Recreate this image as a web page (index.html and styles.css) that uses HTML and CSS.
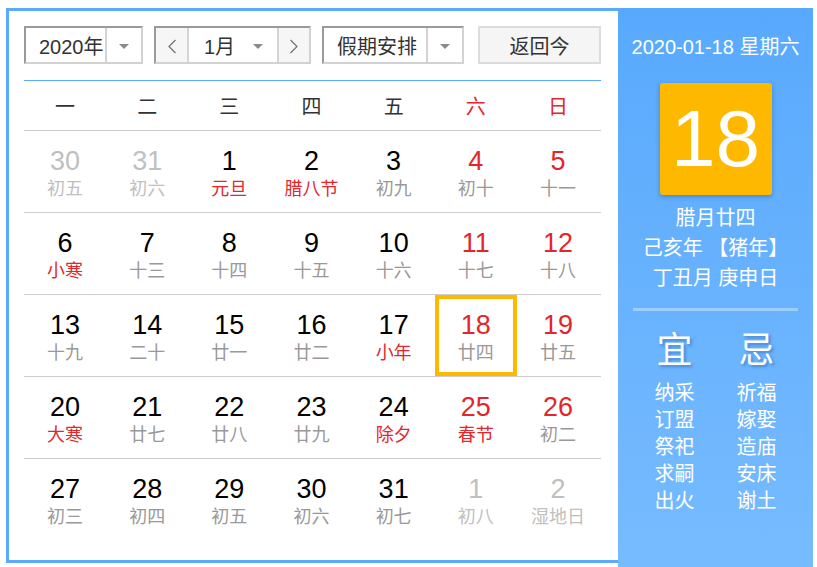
FILE: index.html
```html
<!DOCTYPE html>
<html lang="zh-CN">
<head>
<meta charset="utf-8">
<title>万年历</title>
<link rel="stylesheet" href="styles.css">
</head>
<body>
<div class="calendar">
  <div class="main">
    <div class="toolbar">
      <div class="select year">
        <span class="sel-text">2020年</span>
        <span class="sel-arrow"><i class="caret"></i></span>
      </div>
      <div class="select month">
        <span class="nav prev"><svg width="10" height="15" viewBox="0 0 10 15"><polyline points="8.5,1 2,7.5 8.5,14" fill="none" stroke="#777" stroke-width="1.3"/></svg></span>
        <span class="month-text"><span class="month-label">1月</span><i class="caret"></i></span>
        <span class="nav next"><svg width="10" height="15" viewBox="0 0 10 15"><polyline points="1.5,1 8,7.5 1.5,14" fill="none" stroke="#777" stroke-width="1.3"/></svg></span>
      </div>
      <div class="select holiday">
        <span class="sel-text">假期安排</span>
        <span class="sel-arrow"><i class="caret"></i></span>
      </div>
      <button class="today-btn">返回今</button>
    </div>

    <div class="week">
      <span>一</span><span>二</span><span>三</span><span>四</span><span>五</span><span class="red">六</span><span class="red">日</span>
    </div>

    <div class="days">
      <div class="row">
        <div class="cell other"><div class="num">30</div><div class="lunar">初五</div></div>
        <div class="cell other"><div class="num">31</div><div class="lunar">初六</div></div>
        <div class="cell"><div class="num">1</div><div class="lunar hol">元旦</div></div>
        <div class="cell"><div class="num">2</div><div class="lunar hol">腊八节</div></div>
        <div class="cell"><div class="num">3</div><div class="lunar">初九</div></div>
        <div class="cell wk"><div class="num">4</div><div class="lunar">初十</div></div>
        <div class="cell wk"><div class="num">5</div><div class="lunar">十一</div></div>
      </div>
      <div class="row">
        <div class="cell"><div class="num">6</div><div class="lunar hol">小寒</div></div>
        <div class="cell"><div class="num">7</div><div class="lunar">十三</div></div>
        <div class="cell"><div class="num">8</div><div class="lunar">十四</div></div>
        <div class="cell"><div class="num">9</div><div class="lunar">十五</div></div>
        <div class="cell"><div class="num">10</div><div class="lunar">十六</div></div>
        <div class="cell wk"><div class="num">11</div><div class="lunar">十七</div></div>
        <div class="cell wk"><div class="num">12</div><div class="lunar">十八</div></div>
      </div>
      <div class="row">
        <div class="cell"><div class="num">13</div><div class="lunar">十九</div></div>
        <div class="cell"><div class="num">14</div><div class="lunar">二十</div></div>
        <div class="cell"><div class="num">15</div><div class="lunar">廿一</div></div>
        <div class="cell"><div class="num">16</div><div class="lunar">廿二</div></div>
        <div class="cell"><div class="num">17</div><div class="lunar hol">小年</div></div>
        <div class="cell wk selected"><div class="num">18</div><div class="lunar">廿四</div></div>
        <div class="cell wk"><div class="num">19</div><div class="lunar">廿五</div></div>
      </div>
      <div class="row">
        <div class="cell"><div class="num">20</div><div class="lunar hol">大寒</div></div>
        <div class="cell"><div class="num">21</div><div class="lunar">廿七</div></div>
        <div class="cell"><div class="num">22</div><div class="lunar">廿八</div></div>
        <div class="cell"><div class="num">23</div><div class="lunar">廿九</div></div>
        <div class="cell"><div class="num">24</div><div class="lunar hol">除夕</div></div>
        <div class="cell wk"><div class="num">25</div><div class="lunar hol">春节</div></div>
        <div class="cell wk"><div class="num">26</div><div class="lunar">初二</div></div>
      </div>
      <div class="row">
        <div class="cell"><div class="num">27</div><div class="lunar">初三</div></div>
        <div class="cell"><div class="num">28</div><div class="lunar">初四</div></div>
        <div class="cell"><div class="num">29</div><div class="lunar">初五</div></div>
        <div class="cell"><div class="num">30</div><div class="lunar">初六</div></div>
        <div class="cell"><div class="num">31</div><div class="lunar">初七</div></div>
        <div class="cell other"><div class="num">1</div><div class="lunar">初八</div></div>
        <div class="cell other"><div class="num">2</div><div class="lunar">湿地日</div></div>
      </div>
    </div>
  </div>

  <div class="side">
    <div class="side-date">2020-01-18 星期六</div>
    <div class="big-day">18</div>
    <div class="side-lunar">
      <div>腊月廿四</div>
      <div>己亥年 【猪年】</div>
      <div>丁丑月 庚申日</div>
    </div>
    <div class="side-sep"></div>
    <div class="yiji">
      <div class="yiji-col">
        <div class="yiji-title">宜</div>
        <div class="yiji-item">纳采</div>
        <div class="yiji-item">订盟</div>
        <div class="yiji-item">祭祀</div>
        <div class="yiji-item">求嗣</div>
        <div class="yiji-item">出火</div>
      </div>
      <div class="yiji-col">
        <div class="yiji-title">忌</div>
        <div class="yiji-item">祈福</div>
        <div class="yiji-item">嫁娶</div>
        <div class="yiji-item">造庙</div>
        <div class="yiji-item">安床</div>
        <div class="yiji-item">谢土</div>
      </div>
    </div>
  </div>
</div>
</body>
</html>
```

FILE: styles.css
```css
* { box-sizing: border-box; }

body {
  margin: 0;
  background: #fff;
  font-family: "Liberation Sans", "Noto Sans CJK SC", sans-serif;
  overflow: hidden;
}

.calendar {
  display: flex;
  align-items: flex-start;
  margin: 8px 0 0 6px;
  width: 807px;
}

/* ---------- left panel ---------- */
.main {
  width: 612px;
  height: 555px;
  border: 3px solid #5aabfd;
  border-right: 0;
  padding: 15px 17px 0 15px;
  background: #fff;
}

.toolbar {
  display: flex;
  height: 38px;
  margin-bottom: 16px;
}

.select {
  display: flex;
  height: 38px;
  border: 2px solid;
  border-color: #9a9a9a #d2d2d2 #d2d2d2 #9a9a9a;
  font-size: 20px;
  color: #333;
  background: #fff;
}

.year { width: 119px; margin-right: 11px; }
.month { width: 157px; margin-right: 11px; }
.holiday { width: 142px; margin-right: 14px; }

.sel-text {
  flex: 1;
  padding: 4px 0 0 13px;
  line-height: 30px;
  white-space: nowrap;
}

.sel-arrow {
  width: 36px;
  border-left: 2px solid #d4d4d4;
  display: flex;
  align-items: center;
  justify-content: center;
  padding-top: 2px;
}

.caret {
  display: block;
  width: 0;
  height: 0;
  border-left: 5px solid transparent;
  border-right: 5px solid transparent;
  border-top: 5px solid #8a8a8a;
}

.nav {
  width: 33px;
  background: #f6f6f6;
  display: flex;
  align-items: center;
  justify-content: center;
  padding-top: 2px;
}
.prev { border-right: 2px solid #d4d4d4; }
.next { width: 32px; border-left: 2px solid #d4d4d4; }

.month-text {
  flex: 1;
  display: flex;
  align-items: center;
  justify-content: space-between;
  padding: 2px 14px 0 15px;
}

.month-label {
  line-height: 30px;
  padding-top: 2px;
}

.today-btn {
  width: 123px;
  height: 38px;
  border: 2px solid #dcdcdc;
  background: #f5f5f5;
  font-family: inherit;
  font-size: 20px;
  line-height: 30px;
  color: #333;
  padding: 4px 0 0;
}

.week {
  display: grid;
  grid-template-columns: repeat(7, 1fr);
  height: 51px;
  padding-right: 2px;
  border-top: 1px solid #5aabfd;
  border-bottom: 1px solid #cccccc;
  align-items: center;
  text-align: center;
  font-size: 20px;
  color: #333;
}

.red { color: #e3262c; }

.row {
  display: grid;
  grid-template-columns: repeat(7, 1fr);
  height: 82px;
  padding-right: 2px;
  border-bottom: 1px solid #cccccc;
}
.row:last-child { border-bottom: 0; }

.cell {
  text-align: center;
  padding-top: 15px;
  color: #000;
}

.num {
  font-size: 27px;
  line-height: 30px;
}

.lunar {
  font-size: 18px;
  line-height: 26px;
  color: #999;
  white-space: nowrap;
}

.lunar.hol { color: #e3262c; }
.wk .num { color: #e3262c; }
.other .num,
.other .lunar { color: #c0c0c0; }

.selected {
  border: 4px solid #ffb800;
  padding-top: 11px;
}

/* ---------- right panel ---------- */
.side {
  width: 195px;
  height: 559px;
  background: linear-gradient(#58a9fd, #77bbff);
  color: #fff;
  text-align: center;
  padding-top: 27px;
}

.side-date {
  font-size: 20px;
  line-height: 24px;
  white-space: nowrap;
}

.big-day {
  width: 112px;
  height: 112px;
  margin: 24px auto 0;
  background: #ffb800;
  border-radius: 3px;
  box-shadow: 0 2px 5px rgba(0, 40, 110, 0.3);
  font-size: 80px;
  line-height: 112px;
}

.side-lunar {
  margin-top: 8px;
  font-size: 20px;
  line-height: 30px;
  white-space: nowrap;
}

.side-sep {
  height: 3px;
  margin: 15px 15px 0;
  background: rgba(255, 255, 255, 0.35);
}

.yiji {
  display: flex;
  justify-content: center;
  margin-top: 20px;
}

.yiji-col { width: 82px; }

.yiji-title {
  font-size: 36px;
  line-height: 40px;
  margin-bottom: 9px;
  text-shadow: 2px 2px 3px rgba(0, 50, 130, 0.35);
}

.yiji-item {
  font-size: 20px;
  line-height: 27px;
}
```
